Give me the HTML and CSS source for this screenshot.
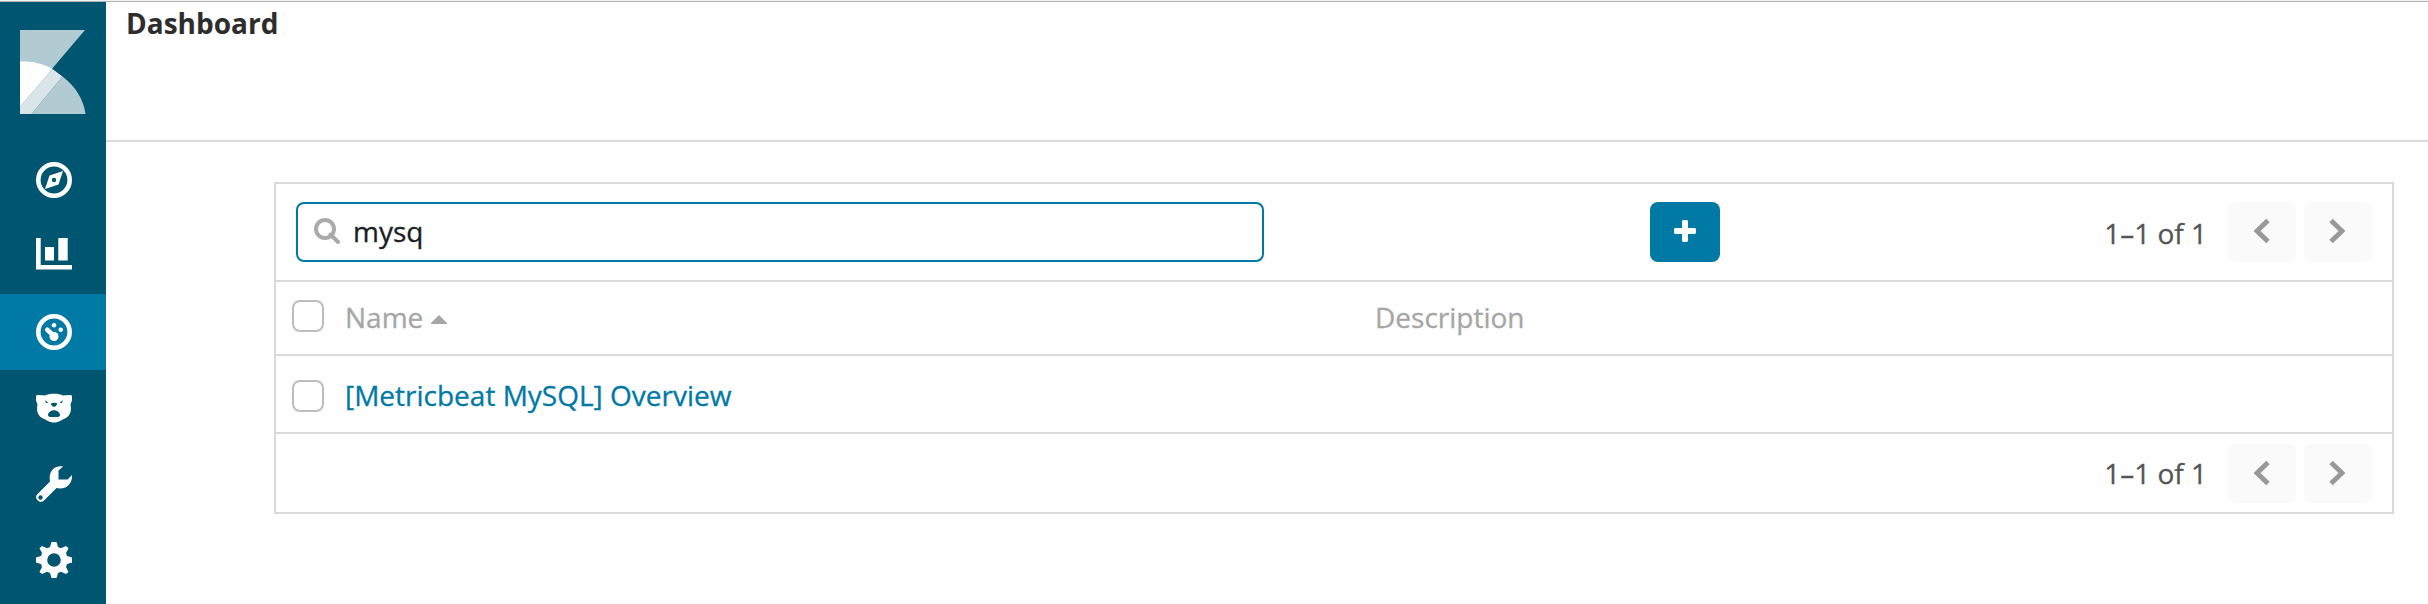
FILE: index.html
```html
<!DOCTYPE html>
<html lang="en">
<head>
<meta charset="utf-8">
<title>Dashboard</title>
<link rel="stylesheet" href="styles.css">
</head>
<body>
<div class="app">
  <nav class="sidebar">
    <div class="brand">
      <svg class="logo" width="66" height="84" viewBox="0 0 66 84">
        <path fill="#b2cbd3" d="M0 0H65L0 76.500Z"/>
        <path fill="#b2cbd3" d="M42.500 46.500C55 56 63.500 69 65.500 84H11.500Z"/>
        <path fill="#d9e5e9" d="M32.500 39L42.500 46.500L11.500 84H0V76.500Z"/>
        <path fill="#fff" d="M0 31.500C12 31 23 33.500 32.500 39L0 76.500Z"/>
      </svg>
    </div>
    <a class="nav-item">
      <svg width="36" height="36" viewBox="0 0 36 36"><circle cx="18" cy="18" r="15.700" fill="none" stroke="#fff" stroke-width="4.600"/><path fill="#fff" fill-rule="evenodd" d="M27 9L22.500 22.500L9 27L13.500 13.500ZM18 15.800a2.200 2.200 0 1 0 0 4.400a2.200 2.200 0 1 0 0-4.400Z"/></svg>
    </a>
    <a class="nav-item">
      <svg width="36" height="36" viewBox="0 0 36 36"><path fill="#fff" d="M0 0H4.700V27H36V31.500H0ZM9 9H18V22.500H9ZM22.300 0H31.700V22.500H22.300Z"/></svg>
    </a>
    <a class="nav-item active">
      <svg width="36" height="36" viewBox="0 0 36 36"><circle cx="18" cy="18" r="15.700" fill="none" stroke="#fff" stroke-width="4.600"/><g fill="#fff"><circle cx="18" cy="11.300" r="2.300"/><circle cx="24.700" cy="15.800" r="2.300"/><circle cx="18" cy="22.500" r="4.500"/></g><path d="M11.300 15.800L17 21" stroke="#fff" stroke-width="4.600" stroke-linecap="round"/></svg>
    </a>
    <a class="nav-item">
      <svg width="36" height="36" viewBox="0 0 36 36"><path fill="#fff" fill-rule="evenodd" d="M0 6.500C0 4.500 3 5 9 5.500C13 3 23 3 27 5.500C33 5 36 4.500 36 6.500V10C36 12 34.500 13 34.500 14.500C36 21 34 26 29 28.500C25 30 23 32.500 18 32.500C13 32.500 11 30 7 28.500C2 26 0 21 1.500 14.500C1.500 13 0 12 0 10ZM9 10.300L12.500 12.700L10 13ZM27 10.300L23.500 12.700L26 13ZM18 12.700C15.500 12.700 14.500 13.500 15 14.500C16 16 17 16.800 18 16.800C19 16.800 20 16 21 14.500C21.500 13.500 20.500 12.700 18 12.700ZM18 20.300C15 20.300 12 22.500 12 25.500C12.500 27.300 15 27 18 27C21 27 23.500 27.300 24 25.500C24 22.500 21 20.300 18 20.300Z"/></svg>
    </a>
    <a class="nav-item">
      <svg width="36" height="36" viewBox="0 0 36 36"><path fill="#fff" fill-rule="evenodd" d="M27 0.500C19 -1 12 5 14 15.500L1.500 28A4.600 4.600 0 0 0 8 34.500L20.500 22C30 24 36.500 18 36 9L31.500 13.500H22.500V4.500ZM4.500 29.300a2.200 2.200 0 1 1 0 4.400a2.200 2.200 0 1 1 0-4.400Z"/></svg>
    </a>
    <a class="nav-item">
      <svg width="36" height="36" viewBox="0 0 36 36"><path fill="#fff" fill-rule="evenodd" d="M15.500 0H20.500L22 5L25 6.300L30 4L32.500 6.300L30 11L31 14L36 15.500V20.500L31 22L30 25L32.500 30L30 32L25 29.700L22 31L20.500 36H15.500L14 31L11 29.700L6 32L3.500 30L6 25L5 22L0 20.500V15.500L5 14L6 11L3.500 6.300L6 4L11 6.300L14 5ZM18 11.200a6.800 6.800 0 1 0 0 13.600a6.800 6.800 0 1 0 0-13.600Z"/></svg>
    </a>
  </nav>
  <main class="main">
    <header class="header"><h1 class="title">Dashboard</h1></header>
    <section class="panel">
      <div class="toolbar">
        <div class="search">
          <svg width="26" height="26" viewBox="0 0 26 26"><path d="M16.500 16.500L24 24" stroke="#aaa" stroke-width="4" stroke-linecap="round"/><circle cx="11" cy="11" r="9" fill="none" stroke="#aaa" stroke-width="4"/></svg>
          <span>mysq</span>
        </div>
        <button class="add" aria-label="Create"><svg width="22" height="22" viewBox="0 0 22 22"><path fill="#fff" d="M9 0H13L14 1V8H21L22 9V13L21 14H14V21L13 22H9L8 21V14H1L0 13V9L1 8H8V1Z"/></svg></button>
        <div class="pager">
          <span class="count">1–1 of 1</span>
          <button class="page" aria-label="Previous"><svg width="16" height="26" viewBox="0 0 16 26"><path d="M14 2.500L3 13L14 23.500" fill="none" stroke="#999" stroke-width="5"/></svg></button>
          <button class="page next" aria-label="Next"><svg width="16" height="26" viewBox="0 0 16 26"><path d="M2 2.500L13 13L2 23.500" fill="none" stroke="#999" stroke-width="5"/></svg></button>
        </div>
      </div>
      <div class="row head">
        <span class="check"></span>
        <span class="name">Name<svg class="sort" width="16" height="9" viewBox="0 0 16 9"><path fill="#a6a6a6" d="M8 0L16 8V9H0V8Z"/></svg></span>
        <span class="description">Description</span>
      </div>
      <div class="row item">
        <span class="check"></span>
        <a class="name link">[Metricbeat MySQL] Overview</a>
      </div>
      <div class="footer">
        <div class="pager">
          <span class="count">1–1 of 1</span>
          <button class="page" aria-label="Previous"><svg width="16" height="26" viewBox="0 0 16 26"><path d="M14 2.500L3 13L14 23.500" fill="none" stroke="#999" stroke-width="5"/></svg></button>
          <button class="page next" aria-label="Next"><svg width="16" height="26" viewBox="0 0 16 26"><path d="M2 2.500L13 13L2 23.500" fill="none" stroke="#999" stroke-width="5"/></svg></button>
        </div>
      </div>
    </section>
  </main>
</div>
</body>
</html>
```
FILE: styles.css
```css
* { box-sizing: border-box; }
body {
  margin: 0;
  background: #fefefe;
  font: 28px/38px "Open Sans", sans-serif;
  color: #555;
  -webkit-text-stroke: 0.3px;
}
svg { display: block; flex: none; }
button { border: 0; padding: 0; }
.app {
  display: flex;
  height: 604px;
  border-top: 1px solid #f2f2f2;
  overflow: hidden;
}
.sidebar {
  width: 106px;
  flex: none;
  background: #005571;
  border-top: 1px solid #b4b4b4;
}
.brand { height: 140px; padding: 28px 20px 0; }
.nav-item {
  display: flex;
  align-items: center;
  justify-content: center;
  height: 76px;
  padding-left: 2px;
}
.nav-item.active { background: #0079a5; }
.main { flex: 1; border-top: 1px solid #b4b4b4; }
.header {
  height: 140px;
  padding: 2px 20px;
  border-bottom: 2px solid #d9d9d9;
}
.title {
  margin: 0;
  font-size: 28px;
  line-height: 38px;
  font-weight: 700;
  color: #2d2d2d;
  -webkit-text-stroke: 0;
}
.panel {
  margin: 40px 34px 0 168px;
  border: 2px solid #d9d9d9;
}
.toolbar {
  display: flex;
  height: 98px;
  padding: 18px 20px 0;
  border-bottom: 2px solid #d9d9d9;
}
.search {
  display: flex;
  flex: none;
  align-items: center;
  width: 968px;
  height: 60px;
  padding: 0 16px 2px;
  gap: 13px;
  border: 2px solid #0079a5;
  border-radius: 8px;
  color: #191e23;
  background: #fff;
}
.add {
  display: flex;
  flex: none;
  align-items: center;
  justify-content: center;
  width: 70px;
  height: 60px;
  margin-left: 386px;
  padding-bottom: 2px;
  background: #0079a5;
  border-radius: 8px;
}
.pager { display: flex; margin-left: auto; gap: 8px; }
.count { margin-right: 13px; padding-top: 12px; }
.page {
  display: flex;
  align-items: center;
  justify-content: center;
  width: 68px;
  height: 60px;
  padding-bottom: 2px;
  border-radius: 8px;
  background: #fafafa;
}
.page.next { padding-right: 3px; }
.row {
  display: flex;
  align-items: center;
  padding-left: 16px;
  border-bottom: 2px solid #d9d9d9;
}
.head { height: 74px; color: #a6a6a6; }
.item { height: 78px; padding-top: 2px; }
.check {
  width: 32px;
  height: 32px;
  flex: none;
  margin-right: 21px;
  border: 2px solid #bdbdbd;
  border-radius: 8px;
  background: #fff;
}
.head .check { margin-bottom: 4px; }
.item .check { margin-top: 2px; }
.name { display: flex; align-items: center; width: 1030px; }
.head .name, .description { padding-bottom: 2px; }
.sort { margin: 5px 0 0 8px; }
.link { color: #0079a5; }
.footer { display: flex; height: 78px; padding: 10px 20px 0; }
.footer .count { padding-top: 10px; }
.footer .page { height: 59px; padding-bottom: 1px; }
```
